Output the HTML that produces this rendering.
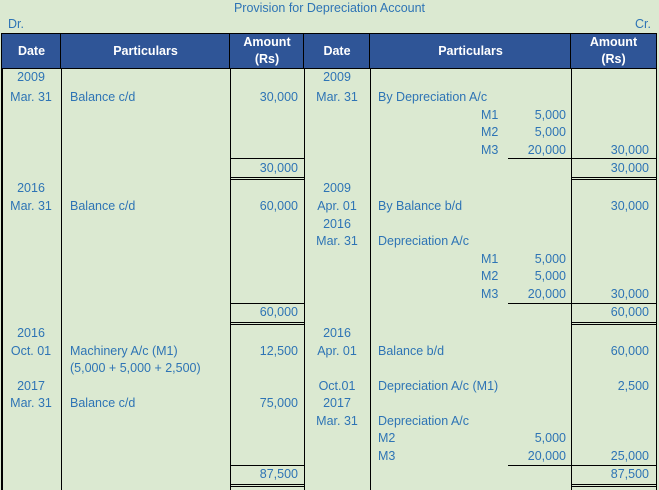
<!DOCTYPE html>
<html><head><meta charset="utf-8"><style>
body{margin:0;width:659px;height:490px;background:#dbe9d1;position:relative;overflow:hidden;font-family:"Liberation Sans",sans-serif;font-size:12.5px;color:#2e74b5}
.t{position:absolute;line-height:18px;white-space:nowrap}
.c{text-align:center}
.r{text-align:right}
.v{position:absolute;top:69px;bottom:0;width:1.5px;background:#000}
.h{position:absolute;height:1.3px;background:#000}
.hd{position:absolute;top:33px;height:36px;background:#2f5597;border:1.5px solid #000;box-sizing:border-box;color:#fff;font-weight:bold;text-align:center;display:flex;align-items:center;justify-content:center;line-height:17px;font-size:12.5px}
</style></head><body>
<div class="t c" style="left:0;width:659px;top:-1px">Provision for Depreciation Account</div>
<div class="t" style="left:8px;top:15px">Dr.</div>
<div class="t" style="right:8px;top:15px">Cr.</div>
<div class="hd" style="left:1px;width:61px">Date</div>
<div class="hd" style="left:60px;width:171px">Particulars</div>
<div class="hd" style="left:229px;width:76px">Amount<br>(Rs)</div>
<div class="hd" style="left:303px;width:68px">Date</div>
<div class="hd" style="left:369px;width:203px">Particulars</div>
<div class="hd" style="left:570px;width:87px">Amount<br>(Rs)</div>
<div class="v" style="left:1px"></div><div class="v" style="left:60.5px"></div><div class="v" style="left:229.5px"></div><div class="v" style="left:303.5px"></div><div class="v" style="left:369.5px"></div><div class="v" style="left:570.5px"></div><div class="v" style="left:655.5px"></div>
<div class="h" style="left:230px;width:74px;top:158px"></div><div class="h" style="left:508px;width:148px;top:158px"></div>
<div class="h" style="left:230px;width:74px;top:176.5px"></div><div class="h" style="left:230px;width:74px;top:179px"></div>
<div class="h" style="left:571px;width:85px;top:176.5px"></div><div class="h" style="left:571px;width:85px;top:179px"></div>
<div class="h" style="left:230px;width:74px;top:303px"></div><div class="h" style="left:508px;width:148px;top:303px"></div>
<div class="h" style="left:230px;width:74px;top:321.5px"></div><div class="h" style="left:230px;width:74px;top:324px"></div>
<div class="h" style="left:571px;width:85px;top:321.5px"></div><div class="h" style="left:571px;width:85px;top:324px"></div>
<div class="h" style="left:230px;width:74px;top:465px"></div><div class="h" style="left:508px;width:148px;top:465px"></div>
<div class="h" style="left:230px;width:74px;top:483.5px"></div><div class="h" style="left:230px;width:74px;top:486px"></div>
<div class="h" style="left:571px;width:85px;top:483.5px"></div><div class="h" style="left:571px;width:85px;top:486px"></div>

<!-- left dates -->
<div class="t c" style="left:1px;width:60px;top:68px">2009</div>
<div class="t c" style="left:1px;width:60px;top:88px">Mar. 31</div>
<div class="t c" style="left:1px;width:60px;top:179px">2016</div>
<div class="t c" style="left:1px;width:60px;top:197px">Mar. 31</div>
<div class="t c" style="left:1px;width:60px;top:324px">2016</div>
<div class="t c" style="left:1px;width:60px;top:342px">Oct. 01</div>
<div class="t c" style="left:1px;width:60px;top:377px">2017</div>
<div class="t c" style="left:1px;width:60px;top:394px">Mar. 31</div>
<!-- left particulars -->
<div class="t" style="left:70px;top:88px">Balance c/d</div>
<div class="t" style="left:70px;top:197px">Balance c/d</div>
<div class="t" style="left:70px;top:342px">Machinery A/c (M1)</div>
<div class="t" style="left:70px;top:359px">(5,000 + 5,000 + 2,500)</div>
<div class="t" style="left:70px;top:394px">Balance c/d</div>
<!-- left amounts -->
<div class="t r" style="right:361px;top:88px">30,000</div>
<div class="t r" style="right:361px;top:159px">30,000</div>
<div class="t r" style="right:361px;top:197px">60,000</div>
<div class="t r" style="right:361px;top:303px">60,000</div>
<div class="t r" style="right:361px;top:342px">12,500</div>
<div class="t r" style="right:361px;top:394px">75,000</div>
<div class="t r" style="right:361px;top:465px">87,500</div>
<!-- right dates -->
<div class="t c" style="left:304px;width:66px;top:68px">2009</div>
<div class="t c" style="left:304px;width:66px;top:88px">Mar. 31</div>
<div class="t c" style="left:304px;width:66px;top:179px">2009</div>
<div class="t c" style="left:304px;width:66px;top:197px">Apr. 01</div>
<div class="t c" style="left:304px;width:66px;top:215px">2016</div>
<div class="t c" style="left:304px;width:66px;top:232px">Mar. 31</div>
<div class="t c" style="left:304px;width:66px;top:324px">2016</div>
<div class="t c" style="left:304px;width:66px;top:342px">Apr. 01</div>
<div class="t c" style="left:304px;width:66px;top:377px">Oct.01</div>
<div class="t c" style="left:304px;width:66px;top:394px">2017</div>
<div class="t c" style="left:304px;width:66px;top:412px">Mar. 31</div>
<!-- right particulars -->
<div class="t" style="left:378px;top:88px">By Depreciation A/c</div>
<div class="t" style="left:481px;top:106px">M1</div>
<div class="t" style="left:481px;top:123px">M2</div>
<div class="t" style="left:481px;top:141px">M3</div>
<div class="t" style="left:378px;top:197px">By Balance b/d</div>
<div class="t" style="left:378px;top:232px">Depreciation A/c</div>
<div class="t" style="left:481px;top:250px">M1</div>
<div class="t" style="left:481px;top:267px">M2</div>
<div class="t" style="left:481px;top:285px">M3</div>
<div class="t" style="left:378px;top:342px">Balance b/d</div>
<div class="t" style="left:378px;top:377px">Depreciation A/c (M1)</div>
<div class="t" style="left:378px;top:412px">Depreciation A/c</div>
<div class="t" style="left:378px;top:429px">M2</div>
<div class="t" style="left:378px;top:447px">M3</div>
<!-- sub amounts -->
<div class="t r" style="right:93px;top:106px">5,000</div>
<div class="t r" style="right:93px;top:123px">5,000</div>
<div class="t r" style="right:93px;top:141px">20,000</div>
<div class="t r" style="right:93px;top:250px">5,000</div>
<div class="t r" style="right:93px;top:267px">5,000</div>
<div class="t r" style="right:93px;top:285px">20,000</div>
<div class="t r" style="right:93px;top:429px">5,000</div>
<div class="t r" style="right:93px;top:447px">20,000</div>
<!-- right amounts -->
<div class="t r" style="right:10px;top:141px">30,000</div>
<div class="t r" style="right:10px;top:159px">30,000</div>
<div class="t r" style="right:10px;top:197px">30,000</div>
<div class="t r" style="right:10px;top:285px">30,000</div>
<div class="t r" style="right:10px;top:303px">60,000</div>
<div class="t r" style="right:10px;top:342px">60,000</div>
<div class="t r" style="right:10px;top:377px">2,500</div>
<div class="t r" style="right:10px;top:447px">25,000</div>
<div class="t r" style="right:10px;top:465px">87,500</div>
</body></html>
